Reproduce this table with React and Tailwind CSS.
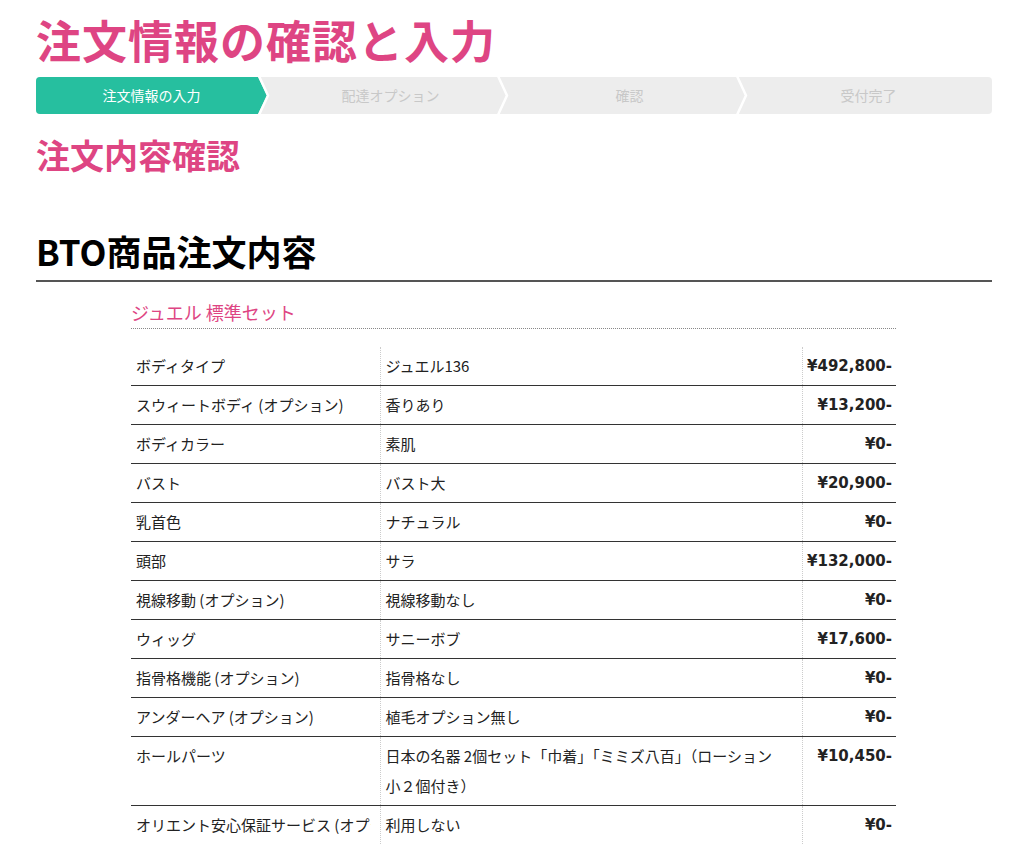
import React from 'react';

const font = { fontFamily: '"Noto Sans CJK JP", "Noto Sans", sans-serif' };

const rows = [
  ['ボディタイプ', 'ジュエル136', '¥492,800-'],
  ['スウィートボディ (オプション)', '香りあり', '¥13,200-'],
  ['ボディカラー', '素肌', '¥0-'],
  ['バスト', 'バスト大', '¥20,900-'],
  ['乳首色', 'ナチュラル', '¥0-'],
  ['頭部', 'サラ', '¥132,000-'],
  ['視線移動 (オプション)', '視線移動なし', '¥0-'],
  ['ウィッグ', 'サニーボブ', '¥17,600-'],
  ['指骨格機能 (オプション)', '指骨格なし', '¥0-'],
  ['アンダーヘア (オプション)', '植毛オプション無し', '¥0-'],
  ['ホールパーツ', <>日本の名器 2個セット「巾着」「ミミズ八百」（ローション<br />小２個付き）</>, '¥10,450-'],
  ['オリエント安心保証サービス (オプション)', '利用しない', '¥0-'],
];

const steps = ['注文情報の入力', '配達オプション', '確認', '受付完了'];

function StepBar() {
  return (
    <div className="relative flex h-[37px] rounded-[4px] bg-[#ededed] overflow-hidden">
      {steps.map((s, i) => (
        <div key={s} className={`relative flex flex-1 items-center justify-center text-[14px] ${i === 0 ? 'text-white' : 'text-[#c8c8c8]'}`}>
          {i === 0 && (
            <div className="absolute inset-y-0 left-0 right-[8px] bg-[#26bf9f] [clip-path:polygon(0_0,calc(100%-9px)_0,100%_50%,calc(100%-9px)_100%,0_100%)]" />
          )}
          <span className="relative -ml-[8px]">{s}</span>
          {i < 3 && (
            <svg className="absolute right-[3px] top-0 h-[37px] w-[14px]" viewBox="0 0 14 37">
              <polyline points="1,-1 10,18.5 1,38" fill="none" stroke="#fff" strokeWidth="2.5" />
            </svg>
          )}
        </div>
      ))}
    </div>
  );
}

export default function App() {
  return (
    <div className="min-h-screen bg-white text-[#333]" style={font}>
      <div className="ml-[36px] mr-[32px] pt-[11px]">
        <h1 className="text-[45px] font-bold leading-[58px] text-[#de4583] tracking-[1px]">注文情報の確認と入力</h1>
        <div className="mt-[8px]">
          <StepBar />
        </div>
        <h2 className="mt-[20px] text-[34px] font-bold leading-[42px] text-[#de4583]">注文内容確認</h2>

        <h3 className="mt-[52px] border-b-2 border-[#555] pb-[6px] text-[35px] font-bold leading-[46px] text-black">BTO商品注文内容</h3>

        <div className="ml-[95px] mr-[96px] mt-[17px]">
          <div className="border-b border-dotted border-[#888] pb-[3px] text-[18px] leading-[26px] text-[#de4583]">ジュエル 標準セット</div>

          <table className="mt-[18px] w-full table-fixed border-collapse text-[15px] text-[#222]">
            <colgroup>
              <col className="w-[249px]" />
              <col className="w-[422px]" />
              <col />
            </colgroup>
            <tbody>
              {rows.map(([a, b, c], i) => (
                <tr key={i} className={i < rows.length - 1 ? 'border-b border-[#333]' : ''}>
                  <td className="align-top px-[5px] pt-[8px] pb-[8px] leading-[22px]">
                    <span className="block w-[235px] overflow-hidden whitespace-nowrap">{a}</span>
                  </td>
                  <td className="align-top border-x border-dotted border-x-[#ccc] px-[5px] pt-[8px] pb-[8px] leading-[22px]">
                    <span className="block leading-[30px] -my-[4px]">{b}</span>
                  </td>
                  <td className="align-top px-[4px] pt-[8px] pb-[8px] text-right font-bold leading-[22px]" style={{ fontFamily: '"DejaVu Sans", sans-serif' }}>{c}</td>
                </tr>
              ))}
            </tbody>
          </table>
        </div>
      </div>
    </div>
  );
}
